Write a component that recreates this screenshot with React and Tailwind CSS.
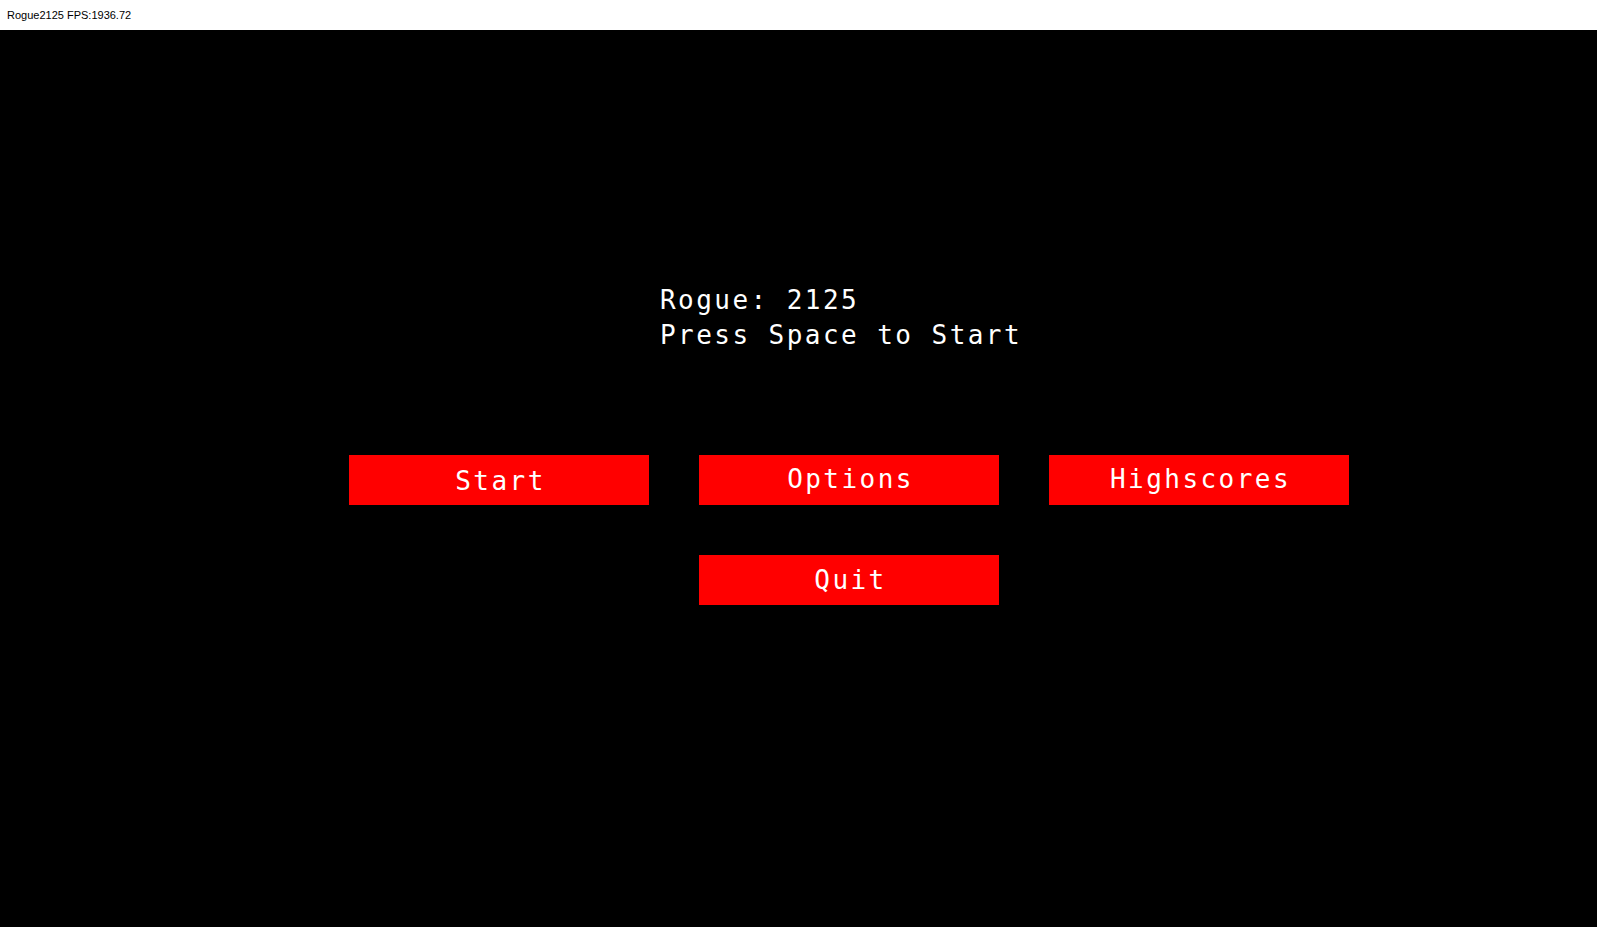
export default function App() {
  const mono = { fontFamily: '"DejaVu Sans Mono", "Liberation Mono", monospace' };
  return (
    <div className="flex h-screen w-full flex-col overflow-hidden bg-black">
      <div
        className="flex h-[30px] shrink-0 items-center bg-white pl-[7px] text-[11px] text-black"
        style={{ fontFamily: '"Liberation Sans", Arial, sans-serif' }}
      >
        Rogue2125 FPS:1936.72
      </div>
      <div className="flex flex-1 flex-col bg-black text-white" style={mono}>
        <div className="ml-[660px] mt-[253px] text-[26px] leading-[35px] tracking-[2.45px]">
          <div>Rogue: 2125</div>
          <div>Press Space to Start</div>
        </div>
        <div className="ml-[349px] mt-[102px] grid w-[1000px] grid-cols-3 gap-[50px]">
          <div className="flex h-[50px] items-center justify-center bg-[#ff0000] pl-[3px] pt-[2px] text-[26px] tracking-[2.45px]">
            Start
          </div>
          <div className="flex h-[50px] items-center justify-center bg-[#ff0000] pl-[3px] pb-[2px] text-[26px] tracking-[2.45px]">
            Options
          </div>
          <div className="flex h-[50px] items-center justify-center bg-[#ff0000] pl-[3px] pb-[2px] text-[26px] tracking-[2.45px]">
            Highscores
          </div>
          <div className="col-start-2 flex h-[50px] items-center justify-center bg-[#ff0000] pl-[3px] text-[26px] tracking-[2.45px]">
            Quit
          </div>
        </div>
      </div>
    </div>
  );
}
